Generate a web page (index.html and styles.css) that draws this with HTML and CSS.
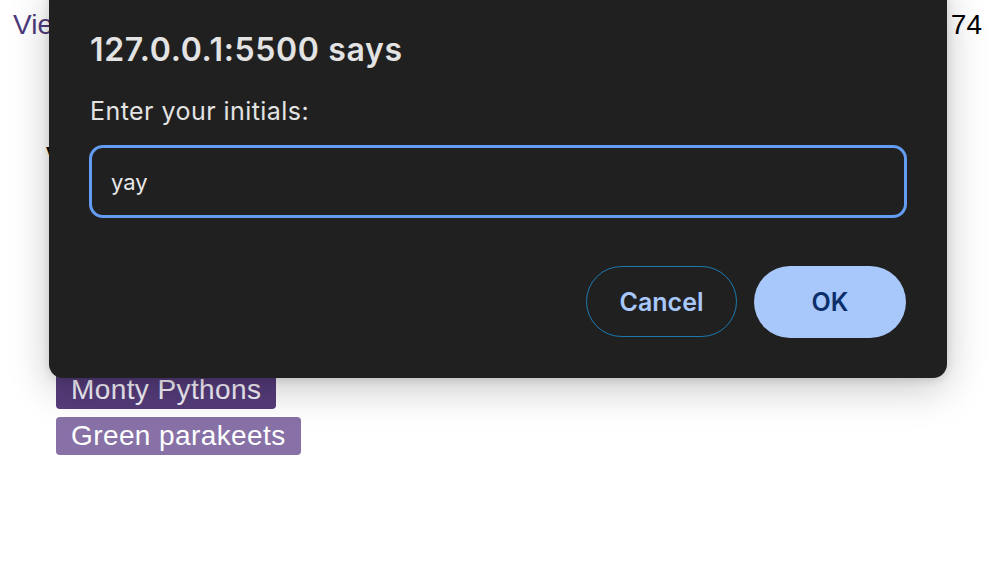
FILE: index.html
```html
<!DOCTYPE html>
<html lang="en">
<head>
<meta charset="utf-8">
<title>Prompt</title>
<link rel="stylesheet" href="styles.css">
</head>
<body>
<div class="page">
  <header class="topbar">
    <a class="view-link" href="#">View scores</a>
    <span class="count">74</span>
  </header>
  <h2 class="heading">Vote for your team</h2>
  <ul class="tags">
    <li class="tag tag-dark">Monty Pythons</li>
    <li class="tag tag-light">Green parakeets</li>
  </ul>
</div>

<div class="dialog" role="dialog">
  <h1 class="dialog-title">127.0.0.1:5500 says</h1>
  <p class="dialog-msg">Enter your initials:</p>
  <div class="dialog-input">yay</div>
  <div class="dialog-actions">
    <button class="btn btn-cancel">Cancel</button>
    <button class="btn btn-ok">OK</button>
  </div>
</div>
</body>
</html>
```
FILE: styles.css
```css
html, body {
  margin: 0;
  padding: 0;
  background: #ffffff;
}
body {
  width: 996px;
  height: 584px;
  overflow: hidden;
  font-family: "Liberation Sans", Arial, sans-serif;
}
.page {
  display: flex;
  flex-direction: column;
}
.topbar {
  display: flex;
  justify-content: space-between;
  align-items: baseline;
  padding: 8px 14px 0 13px;
  font-size: 28px;
  line-height: 34px;
}
.view-link {
  color: #4e3a7c;
  text-decoration: none;
}
.count {
  color: #000;
}
.heading {
  margin: 100px 0 0 46px;
  font-size: 24px;
  font-weight: 700;
  color: #000;
}
.tags {
  list-style: none;
  margin: 201px 0 0 56px;
  padding: 0;
  display: flex;
  flex-direction: column;
  align-items: flex-start;
  gap: 8px;
}
.tag {
  height: 38px;
  line-height: 38px;
  padding: 0 15px 0 15px;
  border-radius: 4px;
  font-size: 28px;
  letter-spacing: 0.4px;
  color: #f4f0f8;
}
.tag-dark { background: #553c7b; }
.tag-light { background: #8771a6; color: #ffffff; }

.dialog {
  position: absolute;
  left: 49px;
  top: -14px;
  width: 898px;
  height: 392px;
  box-sizing: border-box;
  padding: 0 40px;
  background: #202020;
  border-radius: 14px;
  box-shadow: 0 10px 40px rgba(0,0,0,0.22), 0 2px 10px rgba(0,0,0,0.12);
  font-family: Inter, "Noto Sans", sans-serif;
  color: #e3e3e3;
  display: flex;
  flex-direction: column;
}
.dialog-title {
  margin: 44px 0 0 1px;
  font-size: 32px;
  line-height: 40px;
  font-weight: 600;
  letter-spacing: 0.65px;
}
.dialog-msg {
  margin: 25px 0 0 1px;
  font-size: 25px;
  line-height: 32px;
  font-weight: 400;
  letter-spacing: 0.45px;
}
.dialog-input {
  margin-top: 18px;
  height: 73px;
  box-sizing: border-box;
  border: 3.5px solid #639cf0;
  border-radius: 14px;
  padding: 0 19px;
  display: flex;
  align-items: center;
  font-size: 22px;
  color: #e8e8e8;
}
.dialog-actions {
  margin-top: 48px;
  display: flex;
  justify-content: flex-end;
  gap: 17px;
  padding-right: 1px;
}
.btn {
  height: 72px;
  width: 152px;
  border-radius: 36px;
  font-family: Inter, "Noto Sans", sans-serif;
  font-size: 25px;
  font-weight: 600;
  cursor: pointer;
}
.btn-cancel {
  width: 151px;
  height: 71px;
  background: transparent;
  border: 1.5px solid #1d79b1;
  color: #a8c7fa;
}
.btn-ok {
  background: #a8c7fa;
  border: none;
  color: #0b2f6b;
}
```
